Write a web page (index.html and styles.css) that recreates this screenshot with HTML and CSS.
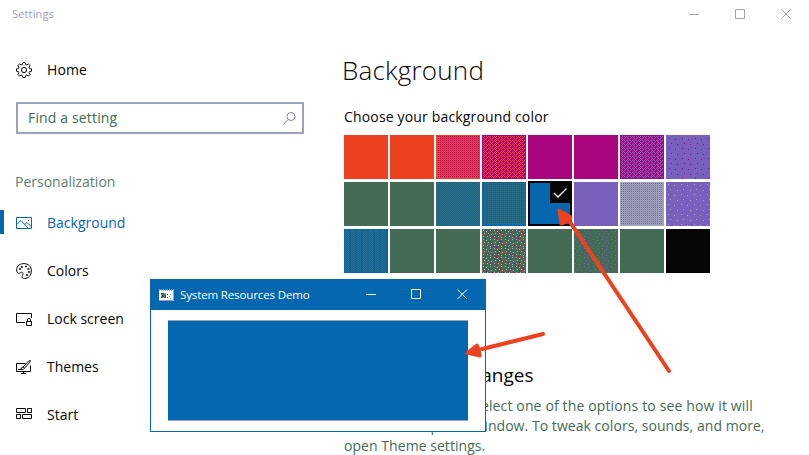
FILE: index.html
```
<!DOCTYPE html>
<html lang="en">
<head>
<meta charset="utf-8">
<title>Settings</title>
<link rel="stylesheet" href="styles.css">
</head>
<body>
<svg class="defs" width="0" height="0">
  <defs>
    <pattern id="dots" width="2" height="2" patternUnits="userSpaceOnUse"><path d="M0 1h1v1h-1z" fill="#a8057e"/></pattern>
    <pattern id="weave" width="6" height="4" patternUnits="userSpaceOnUse" patternTransform="translate(0 1)"><path d="M0 0h1v1h-1zM2 0h1v1h-1zM4 0h1v1h-1zM1 1h1v1h-1zM5 1h1v1h-1zM2 2h1v1h-1zM4 2h1v1h-1zM1 3h1v1h-1zM3 3h1v1h-1z" fill="#ee4120"/></pattern>
    <pattern id="weave-violet" width="6" height="4" patternUnits="userSpaceOnUse" patternTransform="translate(0 1)"><path d="M0 0h1v1h-1zM2 0h1v1h-1zM4 0h1v1h-1zM1 1h1v1h-1zM5 1h1v1h-1zM2 2h1v1h-1zM4 2h1v1h-1zM1 3h1v1h-1zM3 3h1v1h-1z" fill="#7960bc"/></pattern>
    <pattern id="sparse-magenta" width="13" height="10" patternUnits="userSpaceOnUse"><path d="M3 3h1v1h-1zM9 4h1v1h-1zM5 8h1v1h-1zM11 9h1v1h-1z" fill="#a8057e"/></pattern>
    <pattern id="sparse-grey" width="13" height="10" patternUnits="userSpaceOnUse"><path d="M2 2h1v1h-1zM8 3h1v1h-1zM4 7h1v1h-1zM11 8h1v1h-1z" fill="#9f9fbe"/></pattern>
    <pattern id="check-blue" width="2" height="2" patternUnits="userSpaceOnUse"><path d="M1 0h1v1h-1zM0 1h1v1h-1z" fill="#0567b0"/></pattern>
    <pattern id="dots-green" width="2" height="2" patternUnits="userSpaceOnUse"><path d="M0 1h1v1h-1z" fill="#446b56"/></pattern>
    <pattern id="dots-violet" width="2" height="2" patternUnits="userSpaceOnUse"><path d="M1 1h1v1h-1z" fill="#7960bc"/></pattern>
    <pattern id="stripes" width="6" height="2" patternUnits="userSpaceOnUse"><path d="M1 0h1v1h-1zM3 0h1v1h-1zM2 1h1v1h-1zM4 1h1v1h-1z" fill="#446b56"/></pattern>
    <pattern id="confetti" width="11" height="9" patternUnits="userSpaceOnUse"><path d="M1 1h1v1h-1zM4 2h1v1h-1zM8 1h1v1h-1zM2 4h1v1h-1zM6 4h1v1h-1zM9 5h1v1h-1zM1 7h1v1h-1zM5 7h1v1h-1zM8 8h1v1h-1z" fill="#b5aaba"/><path d="M3 0h1v1h-1zM7 3h1v1h-1zM4 6h1v1h-1zM10 7h1v1h-1z" fill="#a8057e"/><path d="M0 5h1v1h-1zM5 1h1v1h-1zM7 6h1v1h-1z" fill="#ee4120"/></pattern>
    <pattern id="speckle" width="9" height="9" patternUnits="userSpaceOnUse"><path d="M1 1h1v1h-1zM5 2h1v1h-1zM3 4h1v1h-1zM7 5h1v1h-1zM1 7h1v1h-1zM5 8h1v1h-1z" fill="#7960bc"/></pattern>
  </defs>
</svg>

<div class="settings">
  <header class="titlebar">
    <span class="title">Settings</span>
    <svg class="caption" width="104" height="12" viewBox="0 0 104 12"><path d="M0 5.500h10M46.500 .5h9v9h-9zM92.500 .5l9 9M101.500 .5l-9 9"/></svg>
  </header>

  <nav class="sidebar">
    <a class="item home"><svg class="icon" viewBox="0 0 16 16"><path d="M6.800 .6h2.400l.4 1.900 1.100 .5 1.700-1 1.700 1.700-1 1.600 .5 1.200 1.900.4v2.300l-1.900.4-.5 1.200 1 1.600-1.700 1.700-1.700-1-1.100.5-.4 1.900H6.800l-.4-1.900-1.200-.5-1.600 1-1.700-1.700 1-1.600-.5-1.200-1.900-.4V6.900l1.900-.4.5-1.200-1-1.600L3.600 2l1.600 1 1.200-.5z"/><circle cx="8" cy="8" r="2.600"/></svg>Home</a>
    <div class="search"><span class="placeholder">Find a setting</span><svg width="13" height="13" viewBox="0 0 13 13"><circle cx="8" cy="4.500" r="4"/><path d="M5 7.500L.5 12.500"/></svg></div>
    <h2 class="section">Personalization</h2>
    <a class="item active"><svg class="icon" viewBox="0 0 16 16"><path d="M.5 2.500h15v11H.5zM.8 9.500L5 5.500l7 7.500M8.500 9.500l2.500-2 4.500 4.500M12 5.500h1"/></svg>Background</a>
    <a class="item"><svg class="icon" viewBox="0 0 16 16"><path d="M1 9C-.5 4 3 .6 8 .6c4.400 0 7.400 3 7.400 7.400s-3 7.500-6.900 7.500c-2.700 0-3-1.600-2-3 .9-1.400.5-3.200-.7-3.300C4.500 9 3.200 12 1 9z"/><path class="spots" d="M3 6h2M5 4h2M9 3.500h2M11.500 6h2M12 9h2M10 12h2"/></svg>Colors</a>
    <a class="item"><svg class="icon" viewBox="0 0 16 16"><path d="M9 11.500H.5v-9h15V7M10.500 10.500h5v4h-5zM11.500 10.500v-2q0-1 1.500-1t1.500 1v2"/></svg>Lock screen</a>
    <a class="item"><svg class="icon" viewBox="0 0 16 16"><path d="M9.500 4.500h-9v8h14v-6M5 14.500h5M7.500 12.500v2M2 10.500h3"/><path d="M7 8l6-6.300q2-.7 1.200 1.200L8.500 9.200zM7 8q-2 .3-2 2.500 3 .5 3.500-1.300"/></svg>Themes</a>
    <a class="item"><svg class="icon" viewBox="0 0 16 16"><path d="M.5 1.500h9v4h-9zM11.500 1.500h4v4h-4zM.5 7.500h4v4h-4zM6.500 7.500h9v4h-9z"/></svg>Start</a>
  </nav>

  <main class="content">
    <h1>Background</h1>
    <p class="label">Choose your background color</p>
    <div class="palette">
      <div class="swatch orange"></div>
      <div class="swatch orange"></div>
      <svg class="swatch orange"><rect x="2" y="1" width="41" height="42" fill="url(#dots)"/></svg>
      <svg class="swatch magenta"><rect x="1" y="1" width="42" height="42" fill="url(#weave)"/></svg>
      <div class="swatch magenta"></div>
      <div class="swatch magenta"></div>
      <svg class="swatch magenta"><rect x="1" y="1" width="42" height="42" fill="url(#weave-violet)"/></svg>
      <svg class="swatch violet"><rect width="44" height="44" fill="url(#sparse-magenta)"/></svg>
      <div class="swatch green"></div>
      <div class="swatch green"></div>
      <svg class="swatch green"><rect width="44" height="44" fill="url(#check-blue)"/></svg>
      <svg class="swatch blue"><rect x="1" y="1" width="42" height="42" fill="url(#dots-green)"/></svg>
      <div class="swatch blue selected"><svg class="tick" width="22" height="22" viewBox="0 0 22 22"><path d="M4 12l4 4L16.500 7.500"/></svg></div>
      <div class="swatch violet"></div>
      <svg class="swatch grey"><rect x="1" y="1" width="42" height="42" fill="url(#dots-violet)"/></svg>
      <svg class="swatch violet"><rect width="44" height="44" fill="url(#sparse-grey)"/></svg>
      <svg class="swatch blue"><rect y="1" width="43" height="42" fill="url(#stripes)"/></svg>
      <div class="swatch green"></div>
      <div class="swatch green"></div>
      <svg class="swatch green"><rect width="44" height="44" fill="url(#confetti)"/></svg>
      <div class="swatch green"></div>
      <svg class="swatch green"><rect width="44" height="44" fill="url(#speckle)"/></svg>
      <div class="swatch green"></div>
      <div class="swatch black"></div>
    </div>
    <h3>Preview changes</h3>
    <p class="help"><span class="l1">To preview, select one of the options to see how it will</span><span class="l2">look in a sample <span class="gap">window. To tweak colors, sounds, and more,</span></span><span class="l3">open Theme settings.</span></p>
  </main>
</div>

<section class="window">
  <header class="window-bar">
    <svg class="app-icon" width="15" height="12" viewBox="0 0 15 12"><path fill="#fff" d="M0 1h15v11H0z"/><path fill="#9f9fbe" d="M0 0h1v2H0zM2 0h1v2H2zM4 0h1v2H4zM6 0h1v2H6zM8 0h1v2H8zM10 0h1v2h-1zM12 0h1v2h-1zM14 0h1v12h-1zM0 11h15v1H0zM11 5h1v1h-1zM10 7h1v1h-1zM11 9h1v1h-1zM2 4h5v5H2z"/><path fill="#446b56" d="M2 4h3v1h1v1h1v3H5V8H4v1H2V7h1V6H2zM8 5h1v1H8zM8 8h1v1H8z"/></svg>
    <span class="window-title">System Resources Demo</span>
    <svg class="window-caption" width="104" height="12" viewBox="0 0 104 12"><path d="M0 5.500h10M45.500 .5h9v9h-9z"/><path d="M91.500 .5l9.500 9.500M101 .5L91.500 10"/></svg>
  </header>
  <div class="canvas"></div>
</section>

<svg class="arrows" width="809" height="455" viewBox="0 0 809 455">
  <path d="M543 334L482 349M669 371L570 222"/>
  <path class="head" d="M467 353L477 345 479 349 480 356zM559 210L571 217 570 221 561 224z"/>
</svg>
</body>
</html>
```
FILE: styles.css
```
* { box-sizing: border-box; }
body {
  margin: 0;
  width: 809px;
  height: 455px;
  overflow: hidden;
  position: relative;
  background: #fff;
  color: #050505;
  font: 14px/20px "Open Sans", "Noto Sans", sans-serif;
}
h1, h2, h3, p { margin: 0; font-weight: 400; }
svg { fill: none; flex: none; }
.defs { position: absolute; }
.settings {
  display: grid;
  grid-template: 29px 426px / 344px 465px;
}
.titlebar {
  grid-column: 1 / 3;
  display: flex;
  justify-content: space-between;
  padding: 4px 16px 0 12px;
  color: #9f9fbe;
  font-size: 11px;
  letter-spacing: .15px;
}
.caption { margin-top: 5px; stroke: #9f9fbe; }
.sidebar { padding-top: 17px; }
.item {
  display: flex;
  align-items: center;
  gap: 15px;
  height: 48px;
  padding-left: 16px;
}
.icon { width: 16px; height: 16px; stroke: #050505; }
.spots { stroke-width: 1.500px; }
.home { letter-spacing: .1px; }
.search {
  display: flex;
  align-items: center;
  justify-content: space-between;
  width: 288px;
  height: 32px;
  margin: 8px 0 0 16px;
  padding: 0 6px 0 10px;
  border: 2px solid #9f9fbe;
  color: #446b56;
  letter-spacing: .15px;
}
.search svg { stroke: #7f8499; }
.section {
  margin: 38px 0 7px 15px;
  font-size: 14px;
  line-height: 20px;
  color: #60806f;
}
.active {
  color: #0567b0;
  background: linear-gradient(#0567b0, #0567b0) 0 11px / 4px 24px no-repeat;
}
.active .icon { stroke: #0567b0; }
.content { padding-top: 21px; }
h1 {
  margin-left: -2px;
  height: 40px;
  font-size: 26px;
  line-height: 40px;
  font-weight: 300;
  letter-spacing: .2px;
}
.label { margin-top: 17px; white-space: nowrap; letter-spacing: .16px; }
.palette {
  display: grid;
  grid-template-columns: repeat(8, 44px);
  grid-auto-rows: 44px;
  gap: 3px 2px;
  margin-top: 8px;
}
.swatch { display: block; width: 44px; height: 44px; shape-rendering: crispEdges; }
.orange { background: #ee4120; }
.magenta { background: #a8057e; }
.violet { background: #7960bc; }
.green { background: #446b56; }
.blue { background: #0567b0; }
.grey { background: #9f9fbe; }
.black { background: #050505; }
.selected {
  display: flex;
  justify-content: flex-end;
  height: 45px;
  margin-top: -1px;
  border: 2px solid #050505;
}
.tick {
  margin: -2px -2px 0 0;
  background: #050505;
  stroke: #fff;
  stroke-width: 1.300px;
  shape-rendering: auto;
}
h3 { margin: 89px 0 0 42px; font-size: 19px; line-height: 26px; white-space: nowrap; }
.help { margin-top: 8px; color: #446b56; letter-spacing: .05px; }
.help > span { display: block; white-space: nowrap; }
.l1 { padding-left: 50px; letter-spacing: .14px; }
.gap { padding-left: 19px; }
.window {
  position: absolute;
  left: 150px;
  top: 279px;
  width: 336px;
  height: 153px;
  border: 1px solid #0567b0;
  background: #fff;
}
.window-bar {
  display: flex;
  align-items: center;
  height: 30px;
  padding: 0 15px 0 8px;
  background: #0567b0;
  color: #fff;
  font-size: 11.500px;
  letter-spacing: -.13px;
}
.window-title { margin-left: 6px; white-space: nowrap; }
.window-caption { margin-left: auto; stroke: #fff; }
.canvas {
  width: 300px;
  height: 101px;
  margin: 10px 0 0 17px;
  background: #0567b0;
  border: solid #9f9fbe;
  border-width: 1px 0;
}
.arrows { position: absolute; left: 0; top: 0; stroke: #ee4120; stroke-width: 4px; stroke-linecap: round; stroke-linejoin: round; }
.head { fill: #ee4120; stroke-width: 3px; }
```
